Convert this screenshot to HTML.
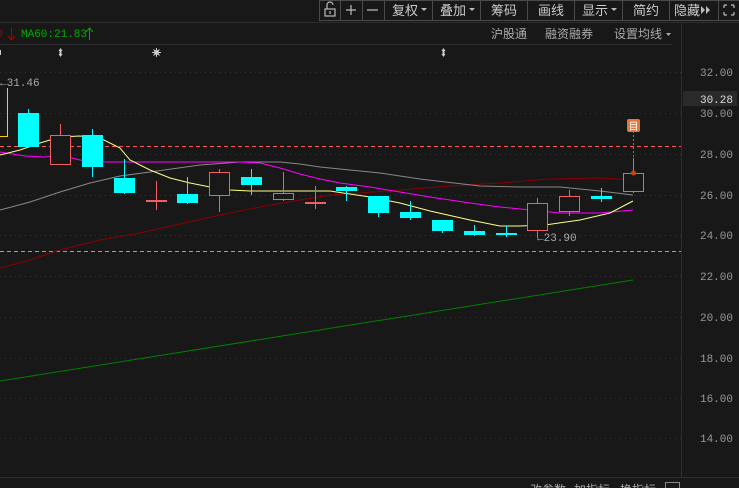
<!DOCTYPE html>
<html><head><meta charset="utf-8"><style>
body{margin:0;background:#181818;width:739px;height:488px;overflow:hidden;font-family:"Liberation Mono","Noto Sans CJK SC",monospace;}
svg{position:absolute;left:0;top:0}
.cn{font-family:"Liberation Sans","Noto Sans CJK SC",sans-serif}
</style></head><body>
<svg width="739" height="488" xmlns="http://www.w3.org/2000/svg">
<rect width="739" height="488" fill="#181818"/>
<g stroke="#4a4a4a" fill="none">
<rect x="319.5" y="0.5" width="420" height="20"/>
<line x1="340.5" y1="0" x2="340.5" y2="20"/><line x1="362.5" y1="0" x2="362.5" y2="20"/>
<line x1="384.5" y1="0" x2="384.5" y2="20"/><line x1="432.5" y1="0" x2="432.5" y2="20"/>
<line x1="480.5" y1="0" x2="480.5" y2="20"/><line x1="527.5" y1="0" x2="527.5" y2="20"/>
<line x1="574.5" y1="0" x2="574.5" y2="20"/><line x1="622.5" y1="0" x2="622.5" y2="20"/>
<line x1="669.5" y1="0" x2="669.5" y2="20"/><line x1="718.5" y1="0" x2="718.5" y2="20"/>
</g>
<g stroke="#bbb" fill="none" stroke-width="1.2">
<rect x="325" y="9" width="10" height="7"/><path d="M327 9V5a3 3 0 0 1 6 0"/><line x1="330" y1="11" x2="330" y2="14"/>
<path d="M346 10h10M351 5v10M367 10h11"/>
<path d="M724 5h3M724 5v3M734 5h-3M734 5v3M724 15h3M724 15v-3M734 15h-3M734 15v-3"/>
</g>
<g class="cn" fill="#ccc" font-size="13">
<text x="392" y="15">复权</text><text x="440" y="15">叠加</text><text x="491" y="15">筹码</text>
<text x="538" y="15">画线</text><text x="582" y="15">显示</text><text x="633" y="15">简约</text><text x="674" y="15">隐藏</text>
</g>
<g fill="#bbb"><path d="M421 8h6l-3 3z M469 8h6l-3 3z M611 8h6l-3 3z M701 6l4 4-4 4z M706 6l4 4-4 4z"/></g>
<line x1="0" y1="22.5" x2="739" y2="22.5" stroke="#2e2e2e"/>
<line x1="0" y1="44.5" x2="672" y2="44.5" stroke="#2e2e2e"/>
<line x1="681.5" y1="22" x2="681.5" y2="477" stroke="#2e2e2e"/>
<text x="-4" y="37" fill="#a00" font-size="11">0</text>
<path d="M11.5 28v12M8 36l3.5 4 3.5-4" stroke="#a00" fill="none"/>
<text x="21" y="37" fill="#0a0" font-size="11">MA60:21.83</text>
<path d="M89.5 28v12M86 32l3.5-4 3.5 4" stroke="#0a0" fill="none"/>
<g class="cn" fill="#aaa" font-size="12"><text x="491" y="38">沪股通</text><text x="545" y="38">融资融券</text><text x="614" y="38">设置均线</text></g>
<path d="M666 33h5l-2.5 3z" fill="#aaa"/>
<g fill="#ccc">
<rect x="-2" y="50" width="3" height="5"/>
<path d="M60.5 48l2 3h-1v3h1l-2 3-2-3h1v-3h-1z"/>
<path d="M443.5 48l2 3h-1v3h1l-2 3-2-3h1v-3h-1z"/>
<circle cx="156.5" cy="52.5" r="2.5"/>
<path d="M156.5 48v9M152 52.5h9M153.5 49.5l6 6M159.5 49.5l-6 6" stroke="#ccc"/>
</g>
<g stroke="#333" stroke-dasharray="1,4">
<line x1="0" y1="72.5" x2="681" y2="72.5"/><line x1="0" y1="113.5" x2="681" y2="113.5"/>
<line x1="0" y1="154.5" x2="681" y2="154.5"/><line x1="0" y1="195.5" x2="681" y2="195.5"/>
<line x1="0" y1="235.5" x2="681" y2="235.5"/><line x1="0" y1="276.5" x2="681" y2="276.5"/>
<line x1="0" y1="317.5" x2="681" y2="317.5"/><line x1="0" y1="358.5" x2="681" y2="358.5"/>
<line x1="0" y1="398.5" x2="681" y2="398.5"/><line x1="0" y1="438.5" x2="681" y2="438.5"/>
</g>
<line x1="0" y1="146.5" x2="681" y2="146.5" stroke="#f55" stroke-dasharray="4,3"/>
<line x1="0" y1="251.5" x2="681" y2="251.5" stroke="#5c8" stroke-dasharray="4,3"/>
<g fill="#999" font-size="11" text-anchor="end">
<text x="733" y="76">32.00</text><text x="733" y="117">30.00</text><text x="733" y="158">28.00</text>
<text x="733" y="199">26.00</text><text x="733" y="239">24.00</text><text x="733" y="280">22.00</text>
<text x="733" y="321">20.00</text><text x="733" y="362">18.00</text><text x="733" y="402">16.00</text><text x="733" y="442">14.00</text>
</g>
<rect x="683" y="91" width="54" height="15" fill="#2a2a2a"/>
<text x="733" y="103" fill="#ddd" font-size="11" text-anchor="end">30.28</text>
<g fill="none" stroke-width="1">
<polyline stroke="#008000" points="0,381 633,280"/>
<polyline stroke="#8b0000" points="0,268 30,260 60,250 100,240 140,233 180,224 220,215 260,207 300,200 330,195 360,193 400,190 450,186 500,183 550,179 600,178 633,180"/>
<polyline stroke="#888" points="0,210 30,202 60,192 90,183 120,176 150,172 200,165 240,162 280,162 300,164 320,167 350,170 380,173 420,179 480,186 520,187 560,187 600,191 633,195"/>
<polyline stroke="#f0f" points="0,152 25,156 45,157 60,155 80,160 100,162 180,162 240,162 260,163 280,168 300,174 320,179 340,183 370,187 400,192 430,197 470,203 500,207 530,210 560,213 600,213 633,210"/>
<polyline stroke="#ff8" points="0,155 20,150 40,143 60,137 80,136 100,138 120,148 130,160 150,170 170,178 190,183 210,187 230,190 250,191 330,191 370,197 400,203 430,211 470,220 500,226 520,226 545,225 580,220 610,213 633,201"/>
</g>
<g fill="#0ff" stroke="#0ff">
<line x1="28.5" y1="109" x2="28.5" y2="113"/><rect x="18" y="113" width="21" height="34" stroke="none"/>
<line x1="92.5" y1="129" x2="92.5" y2="177"/><rect x="82" y="135" width="21" height="32" stroke="none"/>
<line x1="124.5" y1="159" x2="124.5" y2="194"/><rect x="114" y="178" width="21" height="15" stroke="none"/>
<line x1="187.5" y1="177" x2="187.5" y2="204"/><rect x="177" y="194" width="21" height="9" stroke="none"/>
<line x1="251.5" y1="169" x2="251.5" y2="195"/><rect x="241" y="177" width="21" height="8" stroke="none"/>
<line x1="346.5" y1="186" x2="346.5" y2="201"/><rect x="336" y="187" width="21" height="4" stroke="none"/>
<line x1="378.5" y1="196" x2="378.5" y2="217"/><rect x="368" y="196" width="21" height="17" stroke="none"/>
<line x1="410.5" y1="201" x2="410.5" y2="220"/><rect x="400" y="212" width="21" height="6" stroke="none"/>
<line x1="442.5" y1="220" x2="442.5" y2="233"/><rect x="432" y="220" width="21" height="11" stroke="none"/>
<line x1="474.5" y1="225" x2="474.5" y2="236"/><rect x="464" y="231" width="21" height="4" stroke="none"/>
<line x1="506.5" y1="226" x2="506.5" y2="237"/><rect x="496" y="233" width="21" height="2" stroke="none"/>
<line x1="601.5" y1="188" x2="601.5" y2="202"/><rect x="591" y="196" width="21" height="3" stroke="none"/>
</g>
<g fill="#181818" stroke="#f06060">
<line x1="60.5" y1="124" x2="60.5" y2="135"/><rect x="50.5" y="135.5" width="20" height="29"/>
<line x1="156.5" y1="181" x2="156.5" y2="210"/><rect x="146.5" y="200.5" width="20" height="1" fill="#f06060"/>
<line x1="219.5" y1="169" x2="219.5" y2="212"/><rect x="209.5" y="172.5" width="20" height="23"/>
<line x1="283.5" y1="172" x2="283.5" y2="201"/><rect x="273.5" y="193.5" width="20" height="6"/>
<line x1="315.5" y1="186" x2="315.5" y2="209"/><rect x="305.5" y="202.5" width="20" height="1" fill="#f06060"/>
<line x1="537.5" y1="198" x2="537.5" y2="238"/><rect x="527.5" y="203.5" width="20" height="27"/>
<line x1="569.5" y1="190" x2="569.5" y2="216"/><rect x="559.5" y="196.5" width="20" height="15"/>
<line x1="633.5" y1="158" x2="633.5" y2="193"/><rect x="623.5" y="173.5" width="20" height="18"/>
</g>
<path d="M-1 136.5h8.5V88" fill="none" stroke="#fc0"/>
<line x1="633.5" y1="131" x2="633.5" y2="158" stroke="#c60" stroke-dasharray="2,2"/>
<circle cx="633.5" cy="173" r="2.5" fill="#c40"/>
<rect x="627" y="119" width="13" height="13" rx="2" fill="#e8743a"/>
<text x="633.5" y="130" fill="#fff" font-size="10" text-anchor="middle" class="cn">目</text>
<text x="0" y="86" fill="#aaa" font-size="11">←31.46</text>
<text x="537" y="241" fill="#aaa" font-size="11">←23.90</text>
<line x1="0" y1="477.5" x2="739" y2="477.5" stroke="#2e2e2e"/>
<g class="cn" fill="#aaa" font-size="12"><text x="530" y="494">改参数</text><text x="574" y="494">加指标</text><text x="620" y="494">换指标</text></g>
<rect x="665.5" y="482.5" width="14" height="10" fill="none" stroke="#888"/>
</svg>
</body></html>
